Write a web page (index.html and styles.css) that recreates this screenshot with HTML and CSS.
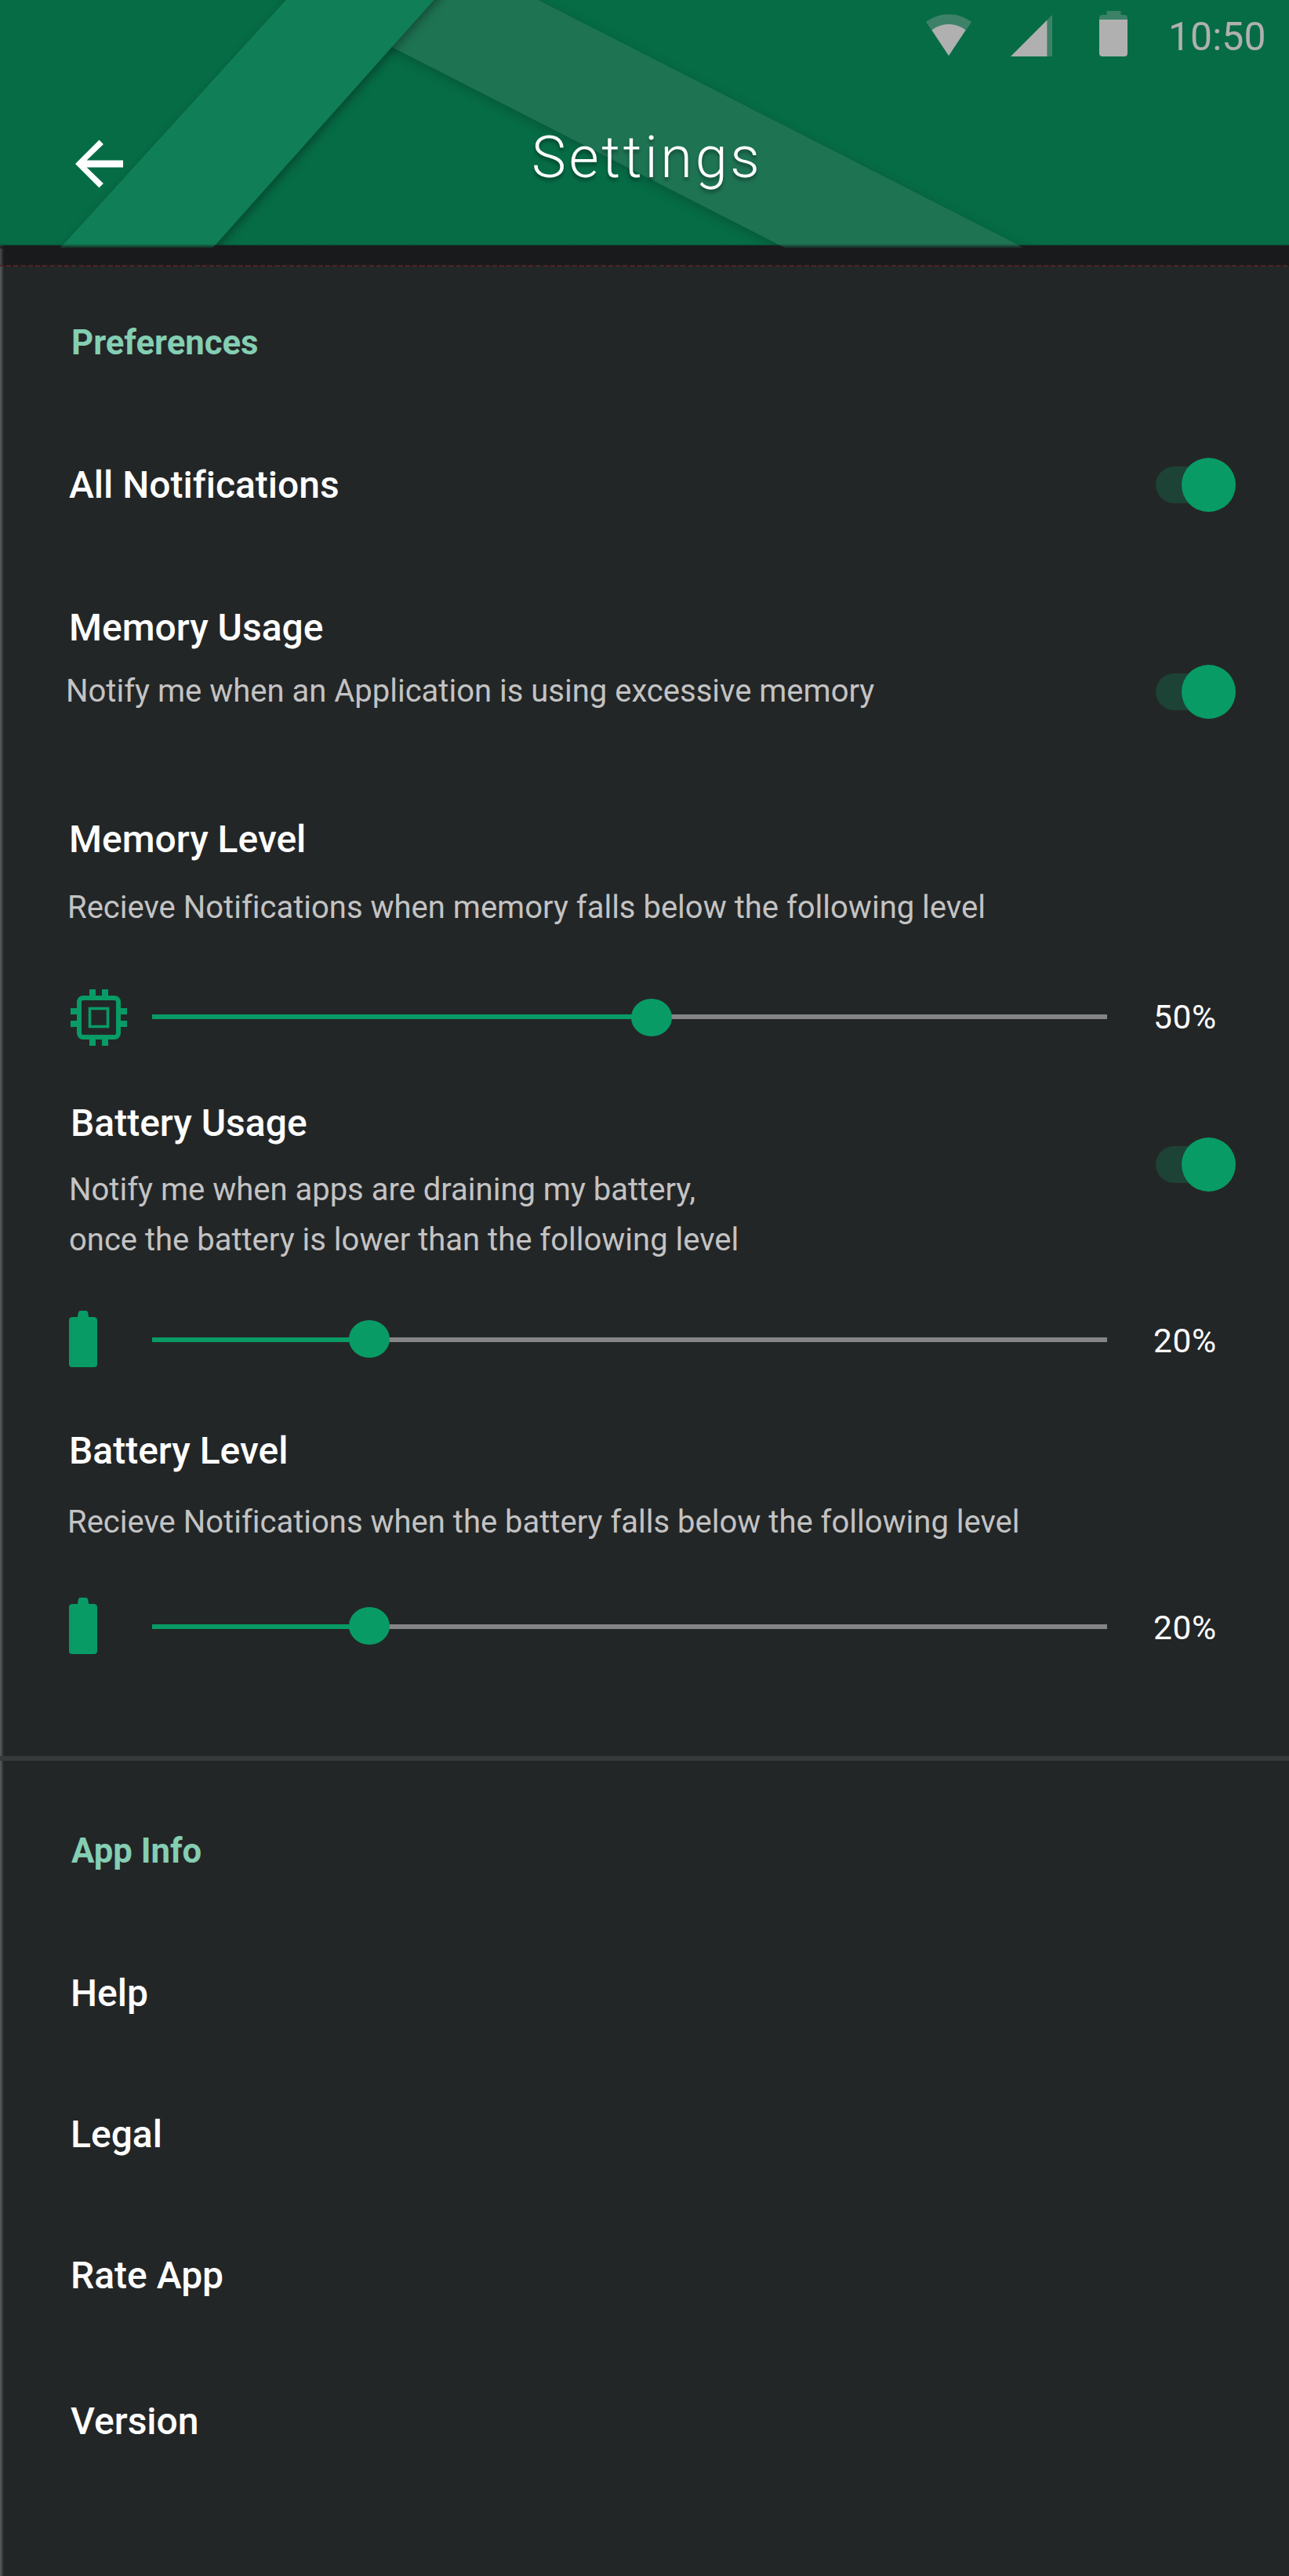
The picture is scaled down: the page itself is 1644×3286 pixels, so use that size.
FILE: index.html
```html
<!DOCTYPE html>
<html lang="en">
<head>
<meta charset="utf-8">
<title>Settings</title>
<link rel="stylesheet" href="styles.css">
</head>
<body>
<header class="app-header">
  <svg class="header-art" viewBox="0 0 1644 317" aria-hidden="true">
    <defs>
      <filter id="soft" x="-10%" y="-10%" width="120%" height="120%" color-interpolation-filters="sRGB">
        <feDropShadow dx="0" dy="4" stdDeviation="7" flood-color="#000" flood-opacity=".2"/>
      </filter>
      <filter id="deep" x="-10%" y="-10%" width="120%" height="120%" color-interpolation-filters="sRGB">
        <feDropShadow dx="4" dy="3" stdDeviation="6" flood-color="#000" flood-opacity=".32"/>
      </filter>
      <linearGradient id="fade" x1="0" y1="0" x2="0" y2="1">
        <stop offset="0" stop-color="#191a1b" stop-opacity="0"/>
        <stop offset="1" stop-color="#191a1b"/>
      </linearGradient>
      <clipPath id="bar"><rect width="1644" height="313"/></clipPath>
    </defs>
    <g clip-path="url(#bar)">
      <path d="M304-40H608L1386 357H1081z" fill="#1e7353" filter="url(#soft)"/>
      <path d="M401-40H589L235 357H40z" fill="#107f57" filter="url(#deep)"/>
    </g>
    <path d="M995 313H1299L1307 317H1003z" fill="#1e7353"/>
    <path d="M79 313H274L270 317H76z" fill="#107f57"/>
    <rect y="311" width="1644" height="6" fill="url(#fade)"/>
  </svg>
  <div class="status-bar">
    <svg class="wifi" viewBox="0 0 58 53">
      <path d="M0 10C17-3 41-3 58 10L29 53z" fill="#b0b0b0" opacity=".32"/>
      <path d="M7.500 20.500C19 10.500 39 10.500 50.500 20.500L29 53z" fill="#b0b0b0"/>
    </svg>
    <svg class="signal" viewBox="0 0 53 53">
      <path d="M46.500 6.500L53 0V53H46.500z" fill="#b0b0b0" opacity=".32"/>
      <path d="M0 53L46.500 6.500V53z" fill="#b0b0b0"/>
    </svg>
    <svg class="cell" viewBox="0 0 36 58">
      <path d="M9.500 0H27.500V5H32Q36 5 36 9V11H0V9Q0 5 4 5H9.500z" fill="#b0b0b0" opacity=".32"/>
      <path d="M0 11H36V54Q36 58 32 58H4Q0 58 0 54z" fill="#b0b0b0"/>
    </svg>
    <span class="clock">10:50</span>
  </div>
  <div class="title-bar">
    <svg class="back" viewBox="4 4 16 16"><path d="M20 10.850H7.830l5.590-5.440L12 4l-8 8 8 8 1.410-1.410L7.830 13.150H20z" fill="#fff"/></svg>
    <h1 class="title">Settings</h1>
  </div>
</header>
<div class="seam"></div>
<main class="content">
  <section class="group preferences">
    <h2 class="group-name">Preferences</h2>
    <div class="row all">
      <h3 class="name">All Notifications</h3>
      <span class="toggle"></span>
    </div>
    <div class="row memory-usage">
      <div>
        <h3 class="name">Memory Usage</h3>
        <p class="note">Notify me when an Application is using excessive memory</p>
      </div>
      <span class="toggle"></span>
    </div>
    <div class="block memory-level">
      <h3 class="name">Memory Level</h3>
      <p class="note">Recieve Notifications when memory falls below the following level</p>
      <div class="slider">
        <svg class="chip" viewBox="0 0 72 72">
          <path d="M24 0h8v9h-8zM40 0h8v9h-8zM24 63h8v9h-8zM40 63h8v9h-8zM0 24h9v8H0zM0 40h9v8H0zM63 24h9v8h-9zM63 40h9v8h-9z" fill="#089b66"/>
          <rect x="11" y="11" width="50" height="50" rx="5" fill="none" stroke="#089b66" stroke-width="6"/>
          <rect x="24.500" y="24.500" width="23" height="23" fill="none" stroke="#089b66" stroke-width="3.600"/>
        </svg>
        <div class="track"><div class="fill" style="width:52.3%"></div></div>
        <span class="value">50%</span>
      </div>
    </div>
    <div class="block battery-usage">
      <div class="row">
        <div>
          <h3 class="name">Battery Usage</h3>
          <p class="note">Notify me when apps are draining my battery,<br>once the battery is lower than the following level</p>
        </div>
        <span class="toggle"></span>
      </div>
      <div class="slider">
        <svg class="battery" viewBox="0 0 36 72"><path d="M13.500 0H22.500Q24.500 1 25 8H32Q36 8.500 36 12V68Q36 72 32 72H4Q0 72 0 68V12Q0 8.500 4 8H11Q11.500 1 13.500 0z" fill="#089b66"/></svg>
        <div class="track"><div class="fill" style="width:22.77%"></div></div>
        <span class="value">20%</span>
      </div>
    </div>
    <div class="block battery-level">
      <h3 class="name">Battery Level</h3>
      <p class="note">Recieve Notifications when the battery falls below the following level</p>
      <div class="slider">
        <svg class="battery" viewBox="0 0 36 72"><path d="M13.500 0H22.500Q24.500 1 25 8H32Q36 8.500 36 12V68Q36 72 32 72H4Q0 72 0 68V12Q0 8.500 4 8H11Q11.500 1 13.500 0z" fill="#089b66"/></svg>
        <div class="track"><div class="fill" style="width:22.77%"></div></div>
        <span class="value">20%</span>
      </div>
    </div>
  </section>
  <section class="group app-info">
    <h2 class="group-name">App Info</h2>
    <nav class="links">
      <a class="name">Help</a>
      <a class="name">Legal</a>
      <a class="name">Rate App</a>
      <a class="name version">Version</a>
    </nav>
  </section>
</main>
</body>
</html>
```
FILE: styles.css
```css
* { box-sizing: border-box; margin: 0; padding: 0; }

body {
  width: 1644px;
  height: 3286px;
  overflow: hidden;
  background: #232627;
  color: #fff;
  font-family: Roboto, "Liberation Sans", sans-serif;
  font-variant-ligatures: none;
}

svg { display: block; }

/* Header */
.app-header {
  position: relative;
  height: 313px;
  background: #066c46;
}
.header-art {
  position: absolute;
  left: 0;
  top: 0;
  width: 1644px;
  height: 317px;
}
.status-bar {
  position: relative;
  display: flex;
  align-items: flex-start;
  height: 84px;
  padding-left: 1181px;
}
.wifi { width: 58px; height: 53px; margin-top: 18px; }
.signal { width: 53px; height: 53px; margin: 19px 0 0 50px; }
.cell { width: 36px; height: 58px; margin: 14px 0 0 60px; }
.clock {
  margin: 17px 0 0 52px;
  color: #b0b0b0;
  font-size: 50px;
  line-height: 60px;
}
.title-bar {
  position: relative;
  display: flex;
  align-items: flex-start;
  padding-left: 96px;
}
.back { width: 61px; height: 62px; margin-top: 94px; }
.title {
  margin: 73px 0 0 521px;
  font-size: 74px;
  font-weight: 300;
  line-height: 88px;
  letter-spacing: 3.6px;
  text-shadow: 0 4px 4px rgba(0, 0, 0, .35);
}
.seam {
  height: 27px;
  background:
    repeating-linear-gradient(90deg, #4e2526 0 6px, #221d1e 6px 9.250px) -1px 100% / calc(100% + 1px) 2px no-repeat,
    linear-gradient(90deg, #4c4e50, #191a1b 5px);
}

/* Content */
.content {
  height: 2946px;
  background: linear-gradient(90deg, #5c5e60, #3a3d3e 3px, #232627 5px) 0 0 / 5px 100% no-repeat;
}
.group-name {
  margin-bottom: -2px;
  padding-left: 91px;
  color: #84ceb3;
  font-size: 43.7px;
  font-weight: 700;
  line-height: 54px;
}
.name {
  display: block;
  padding-left: 88px;
  font-size: 48px;
  font-weight: 500;
  line-height: 56px;
}
.note {
  padding-left: 86px;
  color: #c3c3c3;
  font-size: 40px;
  line-height: 64px;
}
.row {
  display: flex;
  justify-content: space-between;
  padding-right: 68px;
}

.preferences { height: 1900px; padding-top: 70px; }
.all { align-items: center; height: 69px; margin-top: 122px; }
.memory-usage { align-items: flex-end; height: 144px; margin-top: 120px; }
.memory-usage > div { align-self: flex-start; }
.memory-usage .note { margin-top: 21px; padding-left: 84px; }
.memory-level { margin-top: 126px; }
.memory-level .note { margin-top: 27px; }
.memory-level .slider { margin-top: 72px; }
.battery-usage { margin-top: 71px; }
.battery-usage .name { padding-left: 90px; }
.battery-usage .note { margin-top: 25px; padding-left: 88px; }
.battery-usage .toggle { margin-top: 46px; }
.battery-usage .slider { margin-top: 58px; }
.battery-level { margin-top: 79px; }
.battery-level .note { margin-top: 31px; }
.battery-level .slider { margin-top: 64px; }

/* Controls */
.toggle {
  display: flex;
  align-items: center;
  width: 102px;
  height: 69px;
}
.toggle::before {
  content: "";
  flex: none;
  width: 78px;
  height: 47px;
  margin-right: -45px;
  border-radius: 24px;
  background: #1d4236;
}
.toggle::after {
  content: "";
  flex: none;
  width: 69px;
  height: 69px;
  border-radius: 50%;
  background: #089b66;
}
.slider {
  display: grid;
  grid-template-columns: 106px 1218px auto;
  align-items: center;
  height: 72px;
  padding-left: 88px;
}
.chip { width: 72px; height: 72px; margin-left: 2px; }
.battery { width: 36px; height: 72px; }
.track {
  height: 6px;
  margin-top: 2px;
  background: #858587;
}
.fill {
  position: relative;
  height: 6px;
  background: #089b66;
}
.fill::after {
  content: "";
  position: absolute;
  right: -26px;
  top: -22px;
  width: 52px;
  height: 48px;
  border-radius: 50%;
  background: #089b66;
}
.value {
  margin-left: 59px;
  padding-top: 5px;
  font-size: 42.5px;
  line-height: 48px;
  letter-spacing: .6px;
}
.memory-level .value { padding-top: 0; }
.memory-level .track { margin: 0 0 2px; }
.memory-level .fill::after { top: -20px; }

/* App info */
.app-info {
  border-top: 6px solid #373a3b;
  padding-top: 88px;
}
.links {
  display: flex;
  flex-direction: column;
  gap: 124px;
  padding-top: 129px;
}
.links .name { padding-left: 90px; }
.links .version { margin-top: 6px; }
```
